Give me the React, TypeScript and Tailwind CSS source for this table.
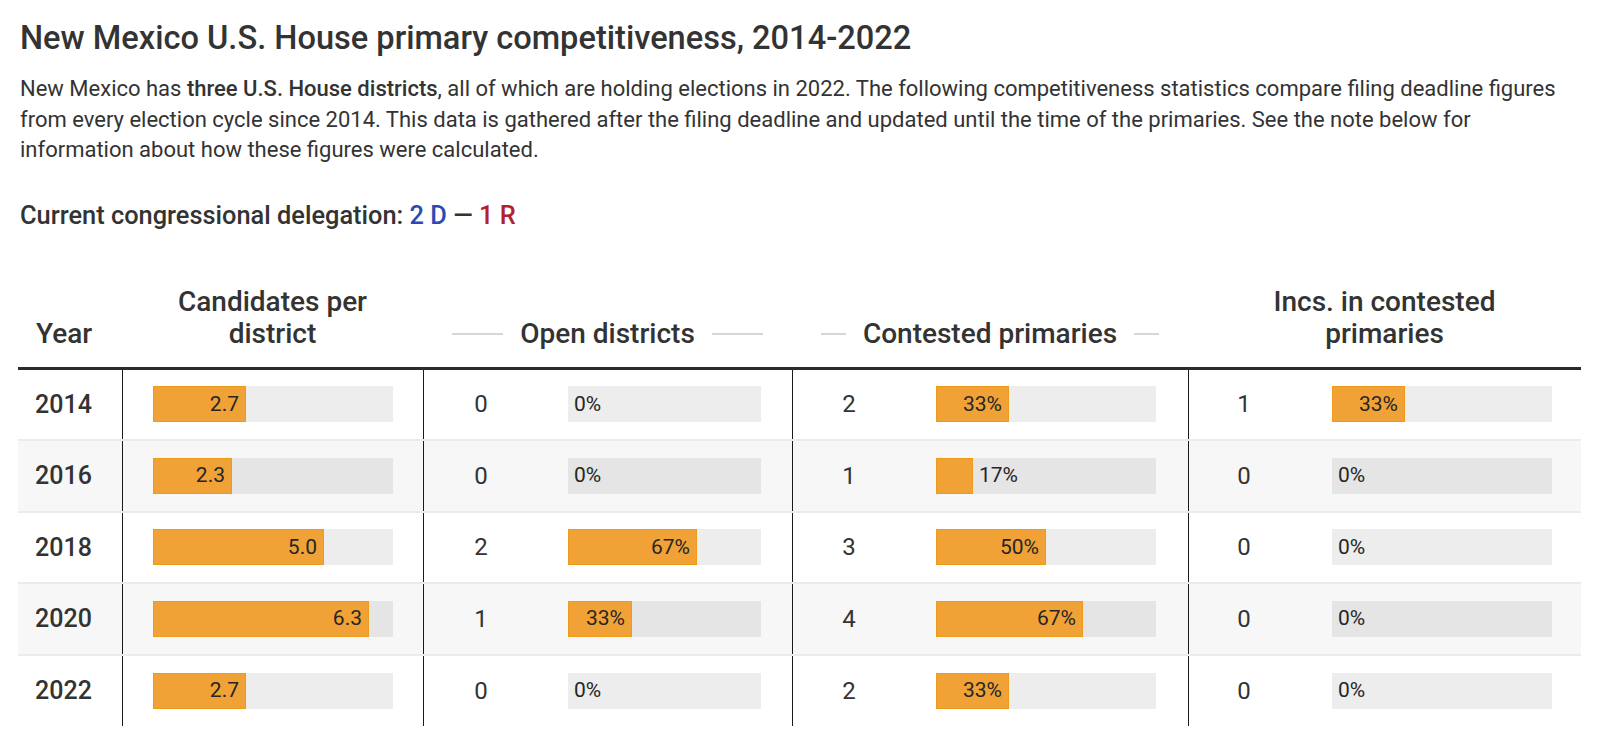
import React from "react";

type Row = {
  year: number;
  cand: number;
  open: number;
  openPct: number;
  cont: number;
  contPct: number;
  inc: number;
  incPct: number;
};

const rows: Row[] = [
  { year: 2014, cand: 2.7, open: 0, openPct: 0, cont: 2, contPct: 1 / 3, inc: 1, incPct: 1 / 3 },
  { year: 2016, cand: 2.3, open: 0, openPct: 0, cont: 1, contPct: 1 / 6, inc: 0, incPct: 0 },
  { year: 2018, cand: 5.0, open: 2, openPct: 2 / 3, cont: 3, contPct: 1 / 2, inc: 0, incPct: 0 },
  { year: 2020, cand: 6.3, open: 1, openPct: 1 / 3, cont: 4, contPct: 2 / 3, inc: 0, incPct: 0 },
  { year: 2022, cand: 2.7, open: 0, openPct: 0, cont: 2, contPct: 1 / 3, inc: 0, incPct: 0 },
];

function Bar({ width, frac, label }: { width: number; frac: number; label: string }) {
  const fill = Math.round(width * frac);
  const inside = fill > 50;
  return (
    <div className="flex h-[36px] items-center bg-black/[0.07]" style={{ width }}>
      {fill > 0 && (
        <div
          className="flex h-full items-center justify-end border border-[#f09a1c] bg-[#f0a236] pr-[6px]"
          style={{ width: fill }}
        >
          {inside && <span className="text-[21px] text-[#262626]">{label}</span>}
        </div>
      )}
      {!inside && <span className="ml-[6px] text-[21px] text-[#262626]">{label}</span>}
    </div>
  );
}

function HeadLine({ children }: { children: React.ReactNode }) {
  return (
    <div className="flex items-center gap-[17px] px-[29px]">
      <div className="h-[2px] flex-1 bg-[#d6d6d6]" />
      <div className="whitespace-nowrap">{children}</div>
      <div className="h-[2px] flex-1 bg-[#d6d6d6]" />
    </div>
  );
}

const pct = (f: number) => `${Math.round(f * 100)}%`;

export default function App() {
  return (
    <div className="h-[745px] w-[1600px] overflow-hidden bg-white pl-[18px] font-['Roboto',sans-serif] text-[#333]">
      <h1 className="pl-[2px] pt-[19px] text-[32.6px] font-medium leading-[38px]">
        New Mexico U.S. House primary competitiveness, 2014-2022
      </h1>
      <p className="mt-[17px] w-[1562px] pl-[2px] text-[22px] leading-[30.5px]">
        New Mexico has <b className="font-medium">three U.S. House districts</b>, all of which are holding elections in
        2022. The following competitiveness statistics compare filing deadline figures from every election cycle since
        2014. This data is gathered after the filing deadline and updated until the time of the primaries. See the note
        below for information about how these figures were calculated.
      </p>
      <div className="mt-[34px] pl-[2px] text-[25.4px] font-medium leading-[30px]">
        Current congressional delegation: <span className="text-[#2a4bb3]">2 D</span> —{" "}
        <span className="text-[#b3202d]">1 R</span>
      </div>

      <div className="w-[1563px]">
        <div className="grid h-[140px] grid-cols-[104px_301px_369px_396px_393px] items-end border-b-[3px] border-[#2b2b2b] pb-[17px] text-[28px] font-medium leading-[32px]">
          <div className="pl-[18px]">Year</div>
          <div className="text-center">
            Candidates per
            <br />
            district
          </div>
          <HeadLine>Open districts</HeadLine>
          <HeadLine>Contested primaries</HeadLine>
          <div className="text-center">
            Incs. in contested
            <br />
            primaries
          </div>
        </div>

        {rows.map((r, i) => (
          <div
            key={r.year}
            className={`grid grid-cols-[104px_301px_369px_396px_393px] ${
              i % 2 === 1 ? "bg-[#f7f7f7]" : "bg-white"
            } ${i < rows.length - 1 ? "h-[71.6px] border-b-2 border-[#ebebeb]" : "h-[70px]"}`}
          >
            <div className="flex items-center pl-[17px] text-[25px] font-medium">{r.year}</div>
            <div className="flex items-center border-l border-[#1a1a1a] pl-[30px]">
              <Bar width={240} frac={r.cand / 7} label={r.cand.toFixed(1)} />
            </div>
            <div className="flex items-center border-l border-[#1a1a1a]">
              <span className="w-[114px] text-center text-[24px]">{r.open}</span>
              <div className="ml-[30px]">
                <Bar width={193} frac={r.openPct} label={pct(r.openPct)} />
              </div>
            </div>
            <div className="flex items-center border-l border-[#1a1a1a]">
              <span className="w-[112px] text-center text-[24px]">{r.cont}</span>
              <div className="ml-[31px]">
                <Bar width={220} frac={r.contPct} label={pct(r.contPct)} />
              </div>
            </div>
            <div className="flex items-center border-l border-[#1a1a1a]">
              <span className="w-[110px] text-center text-[24px]">{r.inc}</span>
              <div className="ml-[33px]">
                <Bar width={220} frac={r.incPct} label={pct(r.incPct)} />
              </div>
            </div>
          </div>
        ))}
      </div>
    </div>
  );
}
